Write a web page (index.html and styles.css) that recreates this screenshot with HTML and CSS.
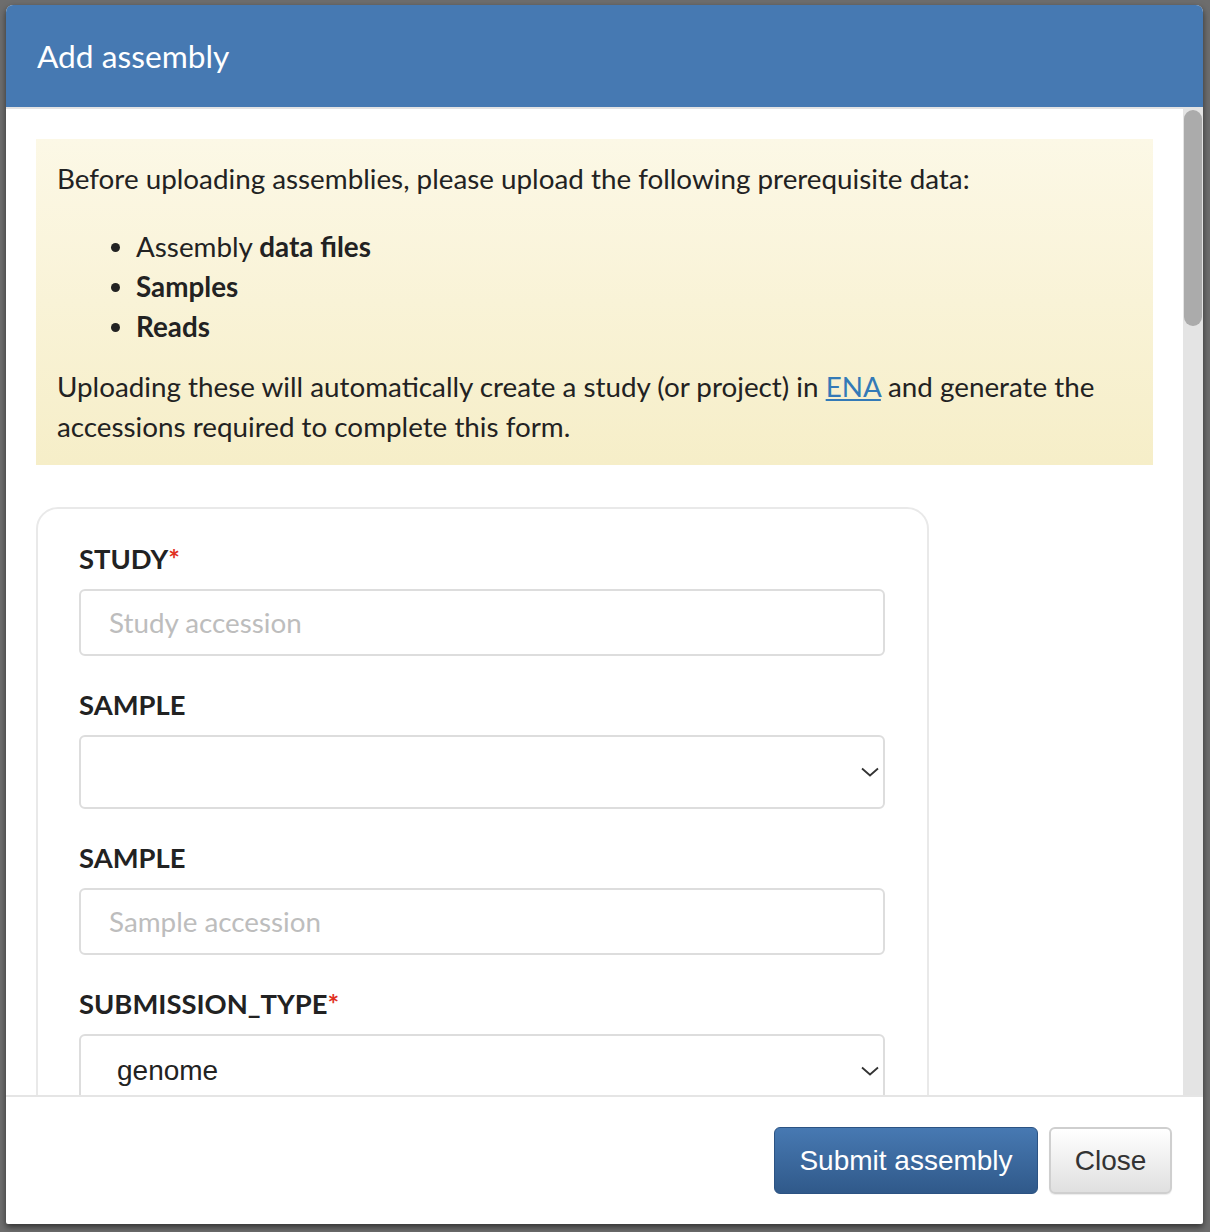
FILE: index.html
```html
<!DOCTYPE html>
<html>
<head>
<meta charset="utf-8">
<link rel="stylesheet" href="styles.css">
</head>
<body>
<div class="modal">
  <div class="modal-header">
    <h1 class="modal-title">Add assembly</h1>
  </div>
  <div class="modal-body">
    <div class="scroll-content">
      <div class="alert">
        <p>Before uploading assemblies, please upload the following prerequisite data:</p>
        <ul>
          <li>Assembly <b>data files</b></li>
          <li><b>Samples</b></li>
          <li><b>Reads</b></li>
        </ul>
        <p>Uploading these will automatically create a study (or project) in <a href="#">ENA</a> and generate the accessions required to complete this form.</p>
      </div>
      <div class="card">
        <div class="field">
          <label class="label">STUDY<span class="req">*</span></label>
          <div class="input placeholder">Study accession</div>
        </div>
        <div class="field">
          <label class="label">SAMPLE</label>
          <div class="select">
            <span class="select-value"></span>
            <svg class="chev" width="18" height="10" viewBox="0 0 18 10"><path d="M1 1.5 L9 8.5 L17 1.5" fill="none" stroke="#333" stroke-width="1.8"/></svg>
          </div>
        </div>
        <div class="field">
          <label class="label">SAMPLE</label>
          <div class="input placeholder">Sample accession</div>
        </div>
        <div class="field">
          <label class="label">SUBMISSION_TYPE<span class="req">*</span></label>
          <div class="select">
            <span class="select-value">genome</span>
            <svg class="chev" width="18" height="10" viewBox="0 0 18 10"><path d="M1 1.5 L9 8.5 L17 1.5" fill="none" stroke="#333" stroke-width="1.8"/></svg>
          </div>
        </div>
      </div>
    </div>
    <div class="scrollbar"><div class="thumb"></div></div>
  </div>
  <div class="modal-footer">
    <button class="btn btn-primary">Submit assembly</button>
    <button class="btn btn-default">Close</button>
  </div>
</div>
</body>
</html>
```

FILE: styles.css
```css
html, body {
  margin: 0;
  padding: 0;
}
body {
  background: #6d6d6d;
  width: 1210px;
  height: 1232px;
  overflow: hidden;
  font-family: Lato, "Open Sans", sans-serif;
  color: #222;
}
.modal {
  margin: 5px 0 0 6px;
  width: 1197px;
  height: 1219px;
  background: #fff;
  border-radius: 7px 7px 2px 2px;
  display: flex;
  flex-direction: column;
  overflow: hidden;
  box-shadow: 0 3px 6px rgba(0,0,0,0.55);
}
.modal-header {
  height: 102px;
  flex: none;
  background: #4679b2;
  border-bottom: 2px solid #e3e3e3;
  display: flex;
  align-items: center;
  padding-left: 31px;
}
.modal-title {
  margin: 0;
  color: #fff;
  font-weight: 400;
  font-size: 31.7px;
  line-height: 40px;
  padding-top: 0;
}
.modal-body {
  flex: 1;
  display: flex;
  overflow: hidden;
  min-height: 0;
}
.scroll-content {
  flex: 1;
  padding: 30px 30px 0 30px;
  overflow: hidden;
}
.scrollbar {
  width: 20px;
  flex: none;
  background: #e4e4e4;
  padding-top: 1px;
  display: flex;
  justify-content: center;
}
.thumb {
  width: 18px;
  height: 216px;
  background: #ababab;
  border-radius: 9px;
}
.alert {
  background: linear-gradient(to bottom, #fcf8e6 0%, #f6eec8 100%);
  padding: 20px 21px 18px 21px;
  font-size: 27.8px;
  line-height: 40px;
}
.alert p {
  margin: 0;
}
.alert ul {
  margin: 28px 0 20px 0;
  padding-left: 79px;
}
.alert a {
  color: #337ab7;
  text-decoration: underline;
}
.card {
  margin-top: 42px;
  width: 806px;
  border: 2px solid #e9e9e9;
  border-radius: 22px;
  padding: 32px 42px 40px 41px;
}
.field + .field {
  margin-top: 31px;
}
.label {
  display: block;
  font-weight: 700;
  font-size: 27.4px;
  line-height: 36px;
  margin-bottom: 12px;
  color: #222;
}
.req {
  color: #e0301e;
}
.input {
  height: 63px;
  border: 2px solid #ddd;
  border-radius: 6px;
  padding-left: 28px;
  display: flex;
  align-items: center;
  font-size: 27.8px;
}
.placeholder {
  color: #bdbdbd;
}
.select {
  height: 70px;
  border: 2px solid #ddd;
  border-radius: 6px;
  padding-left: 36px;
  padding-right: 4px;
  display: flex;
  align-items: center;
  justify-content: space-between;
  font-family: "Liberation Sans", Arial, sans-serif;
  font-size: 28px;
  color: #222;
}
.select-value {
  padding-top: 0;
}
.modal-footer {
  flex: none;
  border-top: 2px solid #e5e5e5;
  padding: 30px 31px 30px 0;
  display: flex;
  justify-content: flex-end;
  gap: 11px;
}
.btn {
  height: 67px;
  border-radius: 6px;
  font-family: "Liberation Sans", Arial, sans-serif;
  font-size: 28px;
  padding: 0;
  white-space: nowrap;
  cursor: pointer;
}
.btn-primary {
  width: 264px;
  color: #fff;
  background: linear-gradient(to bottom, #4779b2 0%, #30598a 100%);
  border: 1px solid #2c5383;
}
.btn-default {
  width: 123px;
  color: #333;
  background: linear-gradient(to bottom, #ffffff 0%, #e0e0e0 100%);
  border: 2px solid #cfcfcf;
  box-shadow: 0 1px 1px rgba(0,0,0,0.08);
}
```
